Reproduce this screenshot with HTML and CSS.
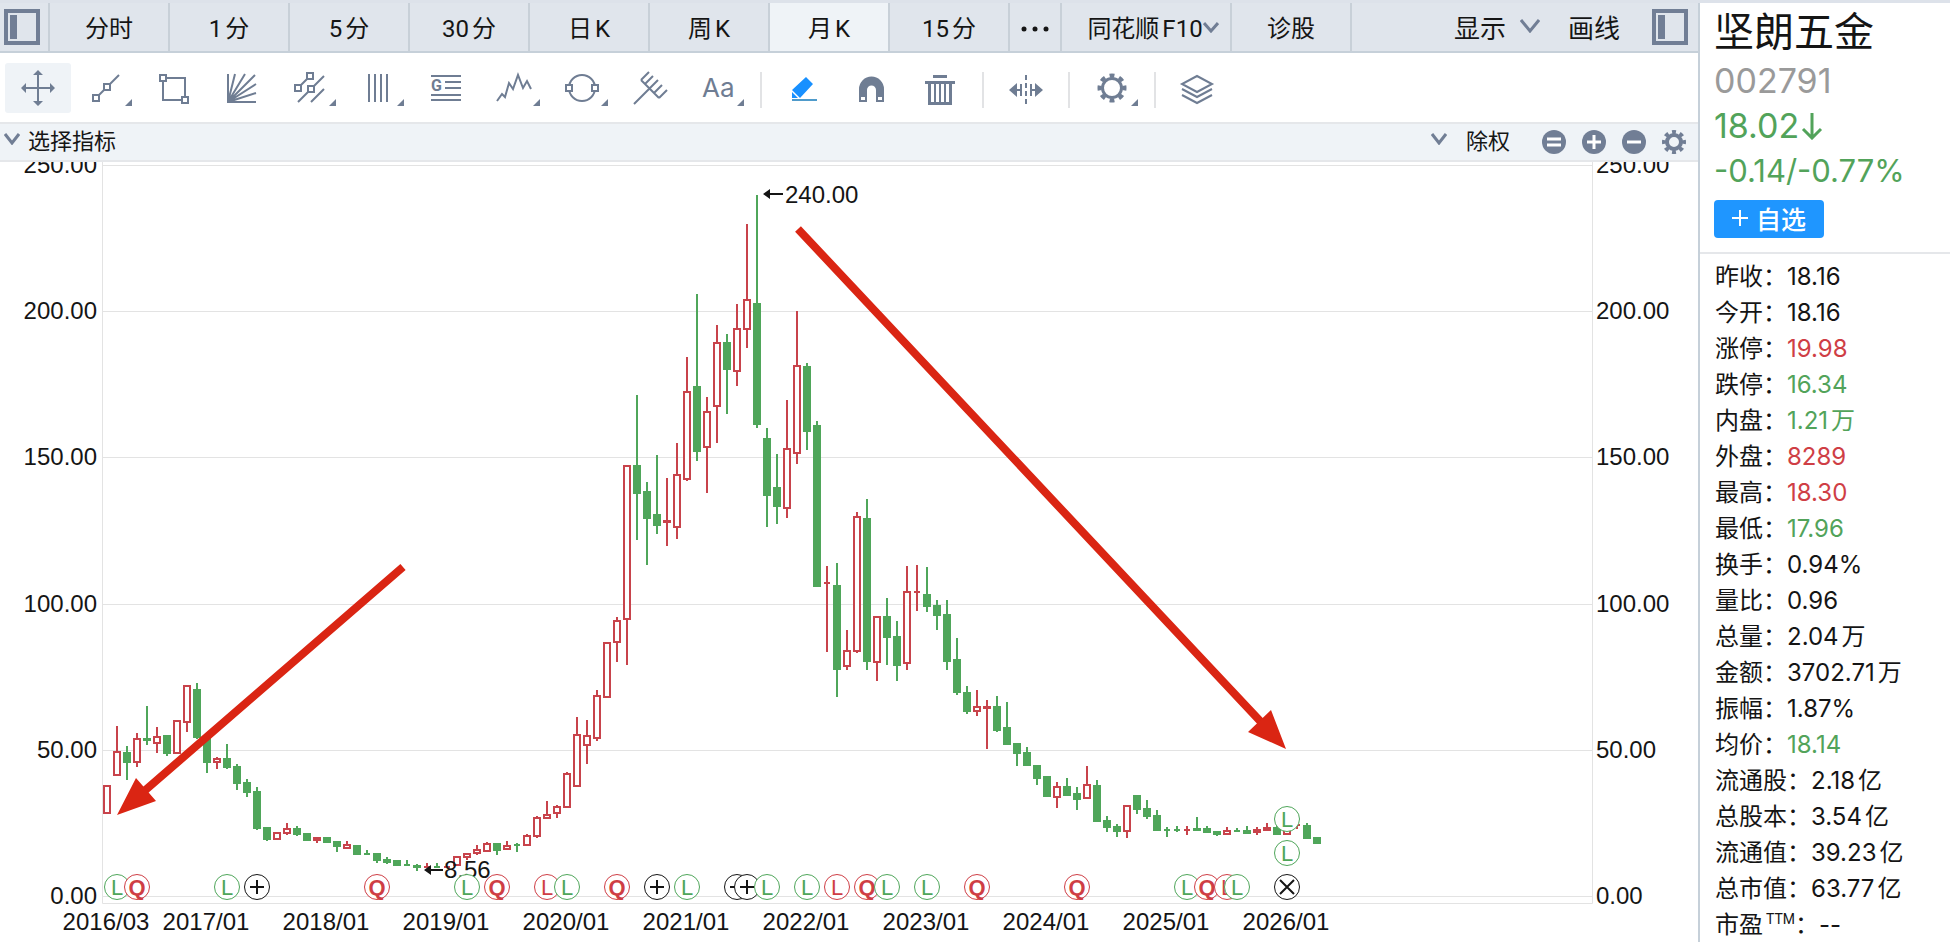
FILE: index.html
```html
<!DOCTYPE html>
<html lang="zh-CN">

<head>
    <meta charset="UTF-8">
    <meta name="viewport" content="width=device-width, initial-scale=1.0">
    <title>坚朗五金 002791</title>
    <link rel="stylesheet" href="styles.css">
</head>

<body>
    <main class="main">
        <nav class="tabs">
            <button class="panel-toggle" aria-label="左侧栏">
                <svg width="36" height="36" viewBox="0 0 36 36"><rect x="2" y="2" width="32" height="32" /><path d="M9.500 6v24" /></svg>
            </button>
            <button class="tab">分时</button>
            <button class="tab">1分</button>
            <button class="tab">5分</button>
            <button class="tab">30分</button>
            <button class="tab">日K</button>
            <button class="tab">周K</button>
            <button class="tab active">月K</button>
            <button class="tab">15分</button>
            <button class="tab tab-more" aria-label="更多">
                <svg width="30" height="8" viewBox="0 0 30 8"><circle cx="4" cy="4" r="2.500" /><circle cx="15" cy="4" r="2.500" /><circle cx="26" cy="4" r="2.500" /></svg>
            </button>
            <button class="tab tab-f10">同花顺F10<svg class="chevron" width="16" height="12" viewBox="0 0 16 12"><path d="M1 2l7 8l7-8" /></svg></button>
            <button class="tab">诊股</button>
            <div class="tabs-right">
                <button class="text-btn">显示<svg class="chevron" width="20" height="14" viewBox="0 0 20 14"><path d="M1 1l9 11l9-11" /></svg></button>
                <button class="text-btn">画线</button>
                <button class="panel-toggle" aria-label="右侧栏">
                    <svg width="36" height="36" viewBox="0 0 36 36"><rect x="2" y="2" width="32" height="32" /><path d="M9.500 6v24" /></svg>
                </button>
            </div>
        </nav>

        <div class="tools">
            <button class="tool active" aria-label="十字光标"><svg viewBox="0 0 66 50"><path d="M33 10v30M18 25h30" /><path class="solid" d="M33 7l5 5h-10zM33 43l5-5h-10zM16 25l5-5v10zM50 25l-5-5v10z" /></svg></button>
            <button class="tool" aria-label="线段"><svg viewBox="0 0 66 50"><path d="M23 35L46 12" /><path class="knob" d="M20 32h6v6h-6zM31 21h6v6h-6z" /><path class="solid" d="M59 36v7h-7z" /></svg></button>
            <button class="tool" aria-label="矩形"><svg viewBox="0 0 66 50"><path d="M22 15h22v22h-22z" /><path class="knob" d="M19 12h6v6h-6zM41 34h6v6h-6z" /></svg></button>
            <button class="tool" aria-label="扇形线"><svg viewBox="0 0 66 50"><path d="M19 11v28h28M19 39l7-28M19 39L36 11M19 39L46 12M19 39L47 21M19 39l28-9" /></svg></button>
            <button class="tool" aria-label="平行线"><svg viewBox="0 0 66 50"><path d="M21 25L33 13M21 39L47 13M34 39L47 26" /><path class="knob" d="M30 10h6v6h-6zM18 22h6v6h-6zM31 23h6v6h-6z" /><path class="solid" d="M59 36v7h-7z" /></svg></button>
            <button class="tool" aria-label="周期线"><svg viewBox="0 0 66 50"><path d="M24 11v28M30 11v28M36 11v28M42 11v28" /><path class="solid" d="M59 36v7h-7z" /></svg></button>
            <button class="tool" aria-label="黄金分割"><svg viewBox="0 0 66 50"><path d="M18 13h30M32 19h16M32 25h16M18 32h30M18 37h30" /><text class="tool-g" x="18" y="28">G</text></svg></button>
            <button class="tool" aria-label="波浪线"><svg viewBox="0 0 66 50"><path d="M16 38L21 31L24 34L28 20L32 26L37 12L42 25L46 18L50 26" /><path class="solid" d="M59 36v7h-7z" /></svg></button>
            <button class="tool" aria-label="圆形"><svg viewBox="0 0 66 50"><circle cx="33" cy="25" r="13" /><path class="knob" d="M17 22h6v6h-6zM43 22h6v6h-6z" /><path class="solid" d="M59 36v7h-7z" /></svg></button>
            <button class="tool" aria-label="叉线"><svg viewBox="0 0 66 50"><path d="M17 41L32 26M24 17L42 35M24 17l8-8M28 21l8-8M32 26l9-9M37 30l8-8M42 35l8-8" /></svg></button>
            <button class="tool" aria-label="文字"><svg viewBox="0 0 66 50"><text class="tool-aa" x="17" y="34">Aa</text><path class="solid" d="M59 36v7h-7z" /></svg></button>
            <span class="divider"></span>
            <button class="tool" aria-label="画笔"><svg viewBox="0 0 66 50"><path class="pen" d="M35 14l7 7l-13 14l-8-8zM21 29l6 6h-6z" /><path class="pen-line" d="M21 37h25" /></svg></button>
            <button class="tool" aria-label="磁吸"><svg viewBox="0 0 66 50"><path class="solid" fill-rule="evenodd" d="M20 39V26a12.500 12.500 0 0 1 25 0V39H37V27a4.500 4.500 0 0 0-9 0V39zM22 34v3h4v-3zM39 34v3h4v-3z" /></svg></button>
            <button class="tool" aria-label="删除"><svg viewBox="0 0 66 50"><path class="thick" d="M26 13.500h14M18 19.500h30M22.500 20v20.500h21V20" /><path d="M28 21v19M33 21v19M38 21v19" /></svg></button>
            <span class="divider"></span>
            <button class="tool" aria-label="左右缩放"><svg viewBox="0 0 66 50"><path d="M20 27h8M28 21v12M38 27h8M38 21v12" /><path stroke-dasharray="5 3" d="M33 12v30" /><path class="solid" d="M16 27l8-7v14zM50 27l-8-7v14z" /></svg></button>
            <span class="divider"></span>
            <button class="tool" aria-label="设置"><svg viewBox="0 0 66 50"><circle class="thick" cx="33" cy="25" r="9.500" /><circle class="teeth" cx="33" cy="25" r="12.500" pathLength="80" /><path class="solid" d="M59 36v7h-7z" /></svg></button>
            <span class="divider"></span>
            <button class="tool" aria-label="图层"><svg viewBox="0 0 66 50"><path d="M32 13l15 8l-15 8l-15-8zM17 26l15 8l15-8M17 32l15 8l15-8" /></svg></button>
        </div>

        <div class="indicator-bar">
            <button class="text-btn small"><svg class="chevron" width="16" height="12" viewBox="0 0 16 12"><path d="M1 1l7 9l7-9" /></svg>选择指标</button>
            <div class="indicator-right">
                <button class="text-btn small wide"><svg class="chevron" width="16" height="12" viewBox="0 0 16 12"><path d="M1 1l7 9l7-9" /></svg>除权</button>
                <button class="round" aria-label="重置"><svg viewBox="0 0 24 24"><circle cx="12" cy="12" r="12" /><path d="M5 9h14M5 15h14" /></svg></button>
                <button class="round" aria-label="放大"><svg viewBox="0 0 24 24"><circle cx="12" cy="12" r="12" /><path d="M5 12h14M12 5v14" /></svg></button>
                <button class="round" aria-label="缩小"><svg viewBox="0 0 24 24"><circle cx="12" cy="12" r="12" /><path d="M5 12h14" /></svg></button>
                <button class="round gear" aria-label="指标设置"><svg viewBox="0 0 24 24"><circle class="ring" cx="12" cy="12" r="7" /><circle class="teeth" cx="12" cy="12" r="10" pathLength="80" /></svg></button>
            </div>
        </div>

        <svg class="chart" id="chart" viewBox="0 162 1698 780">
            <g id="grid"></g>
            <g id="candles"></g>
            <g class="callout">
                <path d="M768 194h15M429 870h14" />
                <path class="tip" d="M763 194l7-5v10zM424 870l7-5v10z" />
                <text x="785" y="203">240.00</text>
                <text x="444" y="878">8.56</text>
            </g>
            <g id="markers"></g>
            <!-- trend arrows -->
            <g class="trend">
                <path d="M403 567L142 793M798 229L1261 722" />
                <path class="head" d="M117 815L136 778L156 801zM1286 749L1271 710L1248 732z" />
            </g>
        </svg>
    </main>

    <aside class="quote">
        <header class="quote-head">
            <h1>坚朗五金</h1>
            <div class="code">002791</div>
            <div class="price">18.02<svg width="22" height="28" viewBox="0 0 22 28"><path d="M11 1v25M2 17l9 9l9-9" /></svg></div>
            <div class="change">-0.14/-0.77%</div>
            <button class="add-btn"><svg width="16" height="16" viewBox="0 0 16 16"><path d="M8 0v16M0 8h16" /></svg>自选</button>
        </header>
        <dl class="stats">
            <div><dt>昨收：</dt><dd>18.16</dd></div>
            <div><dt>今开：</dt><dd>18.16</dd></div>
            <div><dt>涨停：</dt><dd class="up">19.98</dd></div>
            <div><dt>跌停：</dt><dd class="down">16.34</dd></div>
            <div><dt>内盘：</dt><dd class="down">1.21万</dd></div>
            <div><dt>外盘：</dt><dd class="up">8289</dd></div>
            <div><dt>最高：</dt><dd class="up">18.30</dd></div>
            <div><dt>最低：</dt><dd class="down">17.96</dd></div>
            <div><dt>换手：</dt><dd>0.94%</dd></div>
            <div><dt>量比：</dt><dd>0.96</dd></div>
            <div><dt>总量：</dt><dd>2.04万</dd></div>
            <div><dt>金额：</dt><dd>3702.71万</dd></div>
            <div><dt>振幅：</dt><dd>1.87%</dd></div>
            <div><dt>均价：</dt><dd class="down">18.14</dd></div>
            <div><dt>流通股：</dt><dd>2.18亿</dd></div>
            <div><dt>总股本：</dt><dd>3.54亿</dd></div>
            <div><dt>流通值：</dt><dd>39.23亿</dd></div>
            <div><dt>总市值：</dt><dd>63.77亿</dd></div>
            <div><dt>市盈<sup>TTM</sup>：</dt><dd>--</dd></div>
        </dl>
    </aside>

    <script src="chart.js"></script>
</body>

</html>
```

FILE: styles.css
```css
* {
    margin: 0;
    padding: 0;
    box-sizing: border-box;
}

body {
    height: 100vh;
    display: flex;
    overflow: hidden;
    border-top: 3px solid #dde2ea;
    background: #fff;
    color: #151515;
    font-family: Roboto, "Noto Sans CJK SC", sans-serif;
    font-size: 24px;
    text-autospace: normal;
}

button {
    border: none;
    background: none;
    color: inherit;
    font: inherit;
    cursor: pointer;
}

svg {
    display: block;
    fill: none;
}

.main {
    flex: 1;
    min-width: 0;
}

/* period tabs */
.tabs {
    display: flex;
    height: 50px;
    background: #e0e5ec;
    border-bottom: 2px solid #c6d0d9;
}

.tab {
    width: 120px;
    border-left: 2px solid #c8d0d8;
    padding-bottom: 1px;
    display: flex;
    align-items: center;
    justify-content: center;
    white-space: nowrap;
}

.tab.active {
    background: #eff3f7;
}

.tab-more {
    width: 52px;
    padding-top: 5px;
}

.tab-more svg {
    fill: #151515;
}

.tab-f10 {
    width: 170px;
    padding-left: 14px;
}

.panel-toggle {
    width: 48px;
    padding-left: 4px;
    stroke: #717e95;
    stroke-width: 4;
}

.panel-toggle path {
    stroke-width: 7;
}

.chevron {
    stroke: #717e95;
    stroke-width: 3;
}

.tabs-right {
    flex: 1;
    display: flex;
    align-items: center;
    justify-content: flex-end;
    gap: 28px;
    padding-right: 2px;
    border-left: 2px solid #c8d0d8;
}

.text-btn {
    display: flex;
    align-items: center;
    gap: 14px;
    padding-bottom: 2px;
    font-size: 26px;
    white-space: nowrap;
}

/* drawing tools */
.tools {
    display: flex;
    gap: 2px;
    height: 71px;
    padding: 10px 5px;
    border-bottom: 2px solid #e5e7ea;
}

.tool {
    width: 66px;
    height: 50px;
    border-radius: 3px;
}

.tool.active {
    background: #eff3f7;
}

.tool svg {
    width: 66px;
    height: 50px;
    stroke: #6f7d93;
    stroke-width: 2;
}

.tool .solid {
    fill: #6f7d93;
    stroke: none;
}

.tool .knob {
    fill: #fff;
}

.tool .thick {
    stroke-width: 3;
}

.teeth {
    stroke-dasharray: 5 5;
    stroke-dashoffset: 2.5;
    stroke-width: 4;
}

.tool text {
    fill: #6f7d93;
    stroke: none;
}

.tool-g {
    font-size: 16px;
    font-weight: 700;
}

.tool-aa {
    font-family: Inter, sans-serif;
    font-size: 26px;
}

.tool .pen {
    fill: #1890ff;
    stroke: none;
}

.tool .pen-line {
    stroke: #4f9bcb;
}

.divider {
    width: 2px;
    height: 36px;
    margin: 9px 7px 0;
    background: #e2e3e5;
}

/* indicator bar */
.indicator-bar {
    display: flex;
    align-items: center;
    justify-content: space-between;
    height: 38px;
    padding: 0 12px 0 4px;
    background: #eff3f7;
    border-bottom: 2px solid #e5e7ea;
}

.text-btn.small {
    gap: 8px;
    padding-bottom: 6px;
    font-size: 22px;
}

.text-btn.small.wide {
    gap: 19px;
    margin-right: 16px;
}

.indicator-right {
    display: flex;
    align-items: center;
    gap: 16px;
}

.round {
    width: 24px;
    height: 24px;
}

.round svg {
    fill: #717e95;
    stroke: #fff;
    stroke-width: 3;
}

.round circle {
    stroke: none;
}

.gear svg .ring,
.gear svg .teeth {
    fill: none;
    stroke: #717e95;
    stroke-width: 4;
}

/* k-line chart */
.chart {
    width: 100%;
    height: auto;
    font-family: "Liberation Sans", Arial, sans-serif;
    font-size: 24px;
}

.chart text {
    fill: #151515;
}

.grid-line {
    stroke: #e3e3e3;
    stroke-width: 1;
}

.axis-left {
    text-anchor: end;
}

.axis-date,
.marker text {
    text-anchor: middle;
}

.candle {
    stroke-width: 2;
}

.candle.up {
    fill: #fff;
    stroke: #c8434b;
}

.candle.down {
    fill: #4fa65a;
    stroke: #4fa65a;
}

.marker circle {
    fill: #fff;
    stroke: currentColor;
}

.marker path {
    stroke: currentColor;
    stroke-width: 2;
}

.chart .marker text {
    fill: currentColor;
    font-size: 22px;
}

.marker .bold {
    font-weight: 700;
}

.marker.red {
    color: #cf3e45;
}

.marker.green {
    color: #4fa65a;
}

.marker.black {
    color: #151515;
}

.callout path {
    stroke: #151515;
    stroke-width: 2;
}

.callout .tip {
    fill: #151515;
    stroke: none;
}

.trend path {
    stroke: #da2513;
    stroke-width: 8;
}

.trend .head {
    fill: #da2513;
    stroke: none;
}

/* quote panel */
.quote {
    width: 252px;
    border-left: 2px solid #c6d0d9;
}

.quote-head {
    height: 251px;
    padding: 5px 14px 0;
    border-bottom: 2px solid #e5e7ea;
}

.quote h1 {
    font-size: 40px;
    font-weight: 400;
    line-height: 50px;
}

.code,
.price,
.change {
    font-family: Inter, sans-serif;
    font-size: 34px;
    line-height: 45px;
    white-space: nowrap;
}

.code {
    color: #9a9a9a;
}

.price {
    display: flex;
    align-items: center;
    gap: 2px;
    color: #52a35a;
}

.price svg {
    stroke: #52a35a;
    stroke-width: 3;
}

.change {
    font-size: 31px;
    color: #52a35a;
}

.add-btn {
    display: flex;
    align-items: center;
    justify-content: center;
    gap: 8px;
    width: 110px;
    height: 38px;
    margin-top: 7px;
    padding-bottom: 2px;
    border-radius: 4px;
    background: #1f96ff;
    color: #fff;
    font-size: 25px;
    font-weight: 500;
}

.add-btn svg {
    stroke: #fff;
    stroke-width: 2;
}

.stats {
    padding: 5px 0 0 15px;
}

.stats div {
    display: flex;
    height: 36px;
    line-height: 36px;
    white-space: nowrap;
}

.stats dd {
    font-family: Inter, "Noto Sans CJK SC", sans-serif;
}

.stats sup {
    font-size: 14px;
    line-height: 1;
}

.stats .up {
    color: #cf3e45;
}

.stats .down {
    color: #52a35a;
}
```

FILE: chart.js
```js
const SVG_NS = 'http://www.w3.org/2000/svg';
const LEFT = 102.5;
const RIGHT = 1592.5;
const BOTTOM = 903.5;
const STEP = 10;

// one month each: direction, high, body top, body bottom, low
const candles = `
R 785 785 814 814,R 726 751 776 776,G 746 752 763 780,R 733 738 763 767,G 706 738 741 745,
R 727 736 744 753,G 735 735 754 756,R 720 720 754 754,R 685 685 723 732,G 683 689 738 739,
G 738 738 763 773,R 757 758 763 769,G 744 758 768 769,G 764 766 784 790,G 779 782 793 797,
G 787 791 829 830,G 827 827 840 841,R 832 832 840 840,R 823 828 834 835,G 826 828 835 836,
G 833 833 841 841,R 837 837 841 843,G 837 837 843 843,G 841 841 847 852,R 841 844 849 849,
G 845 845 855 855,G 850 853 855 855,G 853 853 861 863,G 857 859 863 864,G 860 860 866 866,
G 860 864 866 866,G 864 865 868 871,R 863 866 868 868,G 863 866 868 868,R 866 866 868 868,
R 856 856 866 866,R 853 853 858 860,R 845 849 854 855,R 842 843 852 852,G 843 843 851 855,
R 841 845 850 850,G 843 844 846 852,R 834 835 846 846,R 816 817 837 838,R 801 814 819 819,
R 805 806 814 818,R 772 773 808 808,R 717 734 787 787,R 720 735 746 764,R 690 695 739 741,
R 642 642 698 698,R 617 620 643 662,R 465 465 620 665,G 395 465 494 540,G 482 491 519 565,
G 455 514 526 534,R 478 520 523 546,R 443 474 528 539,R 357 391 480 481,G 294 386 452 461,
R 397 411 448 493,R 325 342 407 443,G 334 342 370 414,R 304 328 372 386,R 224 299 330 348,
G 195 303 425 428,G 428 438 496 527,G 454 487 507 524,R 400 448 509 518,R 311 365 454 464,
G 363 366 432 450,G 421 425 587 587,R 566 582 584 652,G 563 585 670 697,R 630 650 667 670,
R 512 516 652 653,G 499 518 662 670,R 616 616 663 681,G 598 616 638 665,G 621 636 666 681,
R 566 591 664 670,R 565 591 593 611,G 567 594 607 612,G 600 605 616 630,G 600 614 662 670,
G 638 659 693 695,G 686 692 712 714,R 690 706 712 716,R 700 706 709 749,G 696 706 731 732,
G 702 727 745 745,G 743 743 754 766,G 747 752 766 766,G 765 765 779 785,G 776 776 797 797,
R 782 786 798 808,G 778 786 796 796,G 787 793 800 810,R 766 784 799 799,G 780 785 822 822,
G 816 820 828 832,G 824 826 832 837,R 805 805 832 838,G 795 795 810 814,G 800 808 817 819,
G 810 815 831 831,G 827 829 831 837,G 826 829 831 832,R 826 829 831 835,G 817 828 831 831,
G 826 828 833 833,G 831 831 835 836,R 827 830 835 835,G 828 830 832 832,G 826 830 834 834,
R 827 829 833 835,R 823 827 831 831,G 825 827 835 835,R 818 818 835 835,R 823 824 826 829,
G 823 825 839 839,G 837 837 844 844`.trim().split(',').map(row => row.trim().split(' '));

// event badges: x, y, symbol, colour
const markers = [
    [117, 887, 'L', 'green'], [137, 887, 'Q', 'red'], [227, 887, 'L', 'green'], [257, 887, '+', 'black'],
    [377, 887, 'Q', 'red'], [467, 887, 'L', 'green'], [497, 887, 'Q', 'red'], [547, 887, 'L', 'red'],
    [567, 887, 'L', 'green'], [617, 887, 'Q', 'red'], [657, 887, '+', 'black'], [687, 887, 'L', 'green'],
    [737, 887, '+', 'black'], [747, 887, '+', 'black'], [767, 887, 'L', 'green'], [807, 887, 'L', 'green'],
    [837, 887, 'L', 'red'], [867, 887, 'Q', 'red'], [887, 887, 'L', 'green'], [927, 887, 'L', 'green'],
    [977, 887, 'Q', 'red'], [1077, 887, 'Q', 'red'], [1187, 887, 'L', 'green'], [1207, 887, 'Q', 'red'],
    [1227, 887, 'L', 'red'], [1237, 887, 'L', 'green'], [1287, 819, 'L', 'green'], [1287, 853, 'L', 'green'],
    [1287, 887, 'x', 'black']
];

function add(parent, tag, attrs, text) {
    const el = document.createElementNS(SVG_NS, tag);
    for (const key in attrs) el.setAttribute(key, attrs[key]);
    if (text) el.textContent = text;
    parent.appendChild(el);
    return el;
}

function drawGrid() {
    const grid = document.getElementById('grid');
    for (let value = 0; value <= 250; value += 50) {
        const y = Math.round(896 - value * 2.924);
        add(grid, 'path', { class: 'grid-line', d: `M${LEFT} ${y + 0.5}H${RIGHT}` });
        add(grid, 'text', { class: 'axis-left', x: 97, y: y + 8 }, value.toFixed(2));
        add(grid, 'text', { x: 1596, y: y + 8 }, value.toFixed(2));
    }
    add(grid, 'path', { class: 'grid-line', d: `M${LEFT} 162V${BOTTOM}H${RIGHT}V162` });

    add(grid, 'text', { class: 'axis-date', x: 106, y: 930 }, '2016/03');
    for (let year = 2017; year <= 2026; year++) {
        const x = 206 + (year - 2017) * 12 * STEP;
        add(grid, 'text', { class: 'axis-date', x: x, y: 930 }, `${year}/01`);
    }
}

function drawCandles() {
    const group = document.getElementById('candles');
    candles.forEach(([dir, high, top, bottom, low], i) => {
        const x = 107 + i * STEP;
        const body = Math.max(bottom - top - 2, 0);
        add(group, 'path', {
            class: 'candle ' + (dir === 'R' ? 'up' : 'down'),
            d: `M${x} ${high}V${top}M${x} ${bottom}V${low}M${x - 3} ${+top + 1}h6v${body}h-6z`
        });
    });
}

function drawMarkers() {
    const group = document.getElementById('markers');
    for (const [x, y, symbol, color] of markers) {
        const g = add(group, 'g', { class: 'marker ' + color });
        add(g, 'circle', { cx: x, cy: y, r: 12.5 });
        if (symbol === '+') {
            add(g, 'path', { d: `M${x - 7} ${y}h14M${x} ${y - 7}v14` });
        } else if (symbol === 'x') {
            add(g, 'path', { d: `M${x - 7} ${y - 7}l14 14M${x + 7} ${y - 7}l-14 14` });
        } else {
            add(g, 'text', { x: x, y: y + 8, class: symbol === 'Q' ? 'bold' : '' }, symbol);
        }
    }
}

drawGrid();
drawCandles();
drawMarkers();
```
